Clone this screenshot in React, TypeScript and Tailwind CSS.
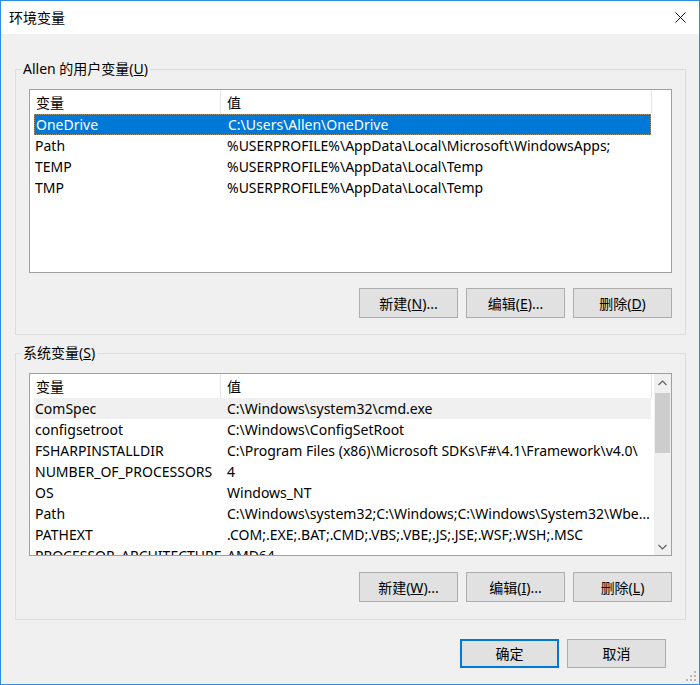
import type { ReactNode } from "react";

type Row = { name: string; value: string };

const userVars: Row[] = [
    { name: "OneDrive", value: "C:\\Users\\Allen\\OneDrive" },
    { name: "Path", value: "%USERPROFILE%\\AppData\\Local\\Microsoft\\WindowsApps;" },
    { name: "TEMP", value: "%USERPROFILE%\\AppData\\Local\\Temp" },
    { name: "TMP", value: "%USERPROFILE%\\AppData\\Local\\Temp" },
];

const systemVars: Row[] = [
    { name: "ComSpec", value: "C:\\Windows\\system32\\cmd.exe" },
    { name: "configsetroot", value: "C:\\Windows\\ConfigSetRoot" },
    { name: "FSHARPINSTALLDIR", value: "C:\\Program Files (x86)\\Microsoft SDKs\\F#\\4.1\\Framework\\v4.0\\" },
    { name: "NUMBER_OF_PROCESSORS", value: "4" },
    { name: "OS", value: "Windows_NT" },
    { name: "Path", value: "C:\\Windows\\system32;C:\\Windows;C:\\Windows\\System32\\Wbem;C:\\Windows\\System32\\WindowsPowerShell\\v1.0\\" },
    { name: "PATHEXT", value: ".COM;.EXE;.BAT;.CMD;.VBS;.VBE;.JS;.JSE;.WSF;.WSH;.MSC" },
    { name: "PROCESSOR_ARCHITECTURE", value: "AMD64" },
];

function Btn({ children, primary }: { children: ReactNode; primary?: boolean }) {
    return (
        <div className={`w-[99px] flex items-center justify-center bg-[#e1e1e1] border ${primary ? "border-[#0078d7] shadow-[inset_0_0_0_1px_#0078d7]" : "border-[#adadad]"}`}>
            {children}
        </div>
    );
}

function Header() {
    return (
        <div className="flex h-[24px] w-[622px] shrink-0">
            <div className="w-[191px] pl-[6px] flex items-center border-r border-[#e5e5e5]">变量</div>
            <div className="flex-1 pl-[6px] flex items-center border-r border-[#e5e5e5]">值</div>
        </div>
    );
}

function ListRow({ row, state }: { row: Row; state?: "focus" | "gray" }) {
    const bg = state === "focus"
        ? "bg-[#0078d7] text-white border border-dotted border-[#9c8f74]"
        : state === "gray" ? "bg-[#f0f0f0]" : "";
    return (
        <div className={`flex h-[21px] ml-[4px] w-[617px] items-center shrink-0 ${bg}`}>
            <div className="w-[192px] pl-[1px] truncate">{row.name}</div>
            <div className="flex-1 min-w-0 pl-[1px] pr-[1px] truncate">{row.value}</div>
        </div>
    );
}

function Chevron({ up }: { up?: boolean }) {
    return (
        <svg width="9" height="6" viewBox="0 0 9 6" className="text-[#606060]">
            <path d={up ? "M0.5 5 L4.5 1 L8.5 5" : "M0.5 1 L4.5 5 L8.5 1"} fill="none" stroke="currentColor" strokeWidth="1.2" />
        </svg>
    );
}

function Group({ title, children }: { title: ReactNode; children: ReactNode }) {
    return (
        <fieldset className="w-[671px] border border-[#dcdcdc] px-[13px]">
            <legend className="-ml-[8px] px-[2px] leading-[20px]">{title}</legend>
            {children}
        </fieldset>
    );
}

export default function App() {
    return (
        <div
            className="w-[700px] h-[685px] border border-[#2d8fe4] flex flex-col text-[14px] text-black select-none relative"
            style={{ fontFamily: '"Noto Sans", "Noto Sans CJK SC", sans-serif' }}
        >
            <div className="h-[33px] bg-white flex items-center justify-between pl-[8px] pr-[13px] shrink-0">
                <span className="leading-none">环境变量</span>
                <svg width="11" height="11" viewBox="0 0 11 11">
                    <path d="M0.5 0.5 L10.5 10.5 M10.5 0.5 L0.5 10.5" stroke="#111" strokeWidth="1" />
                </svg>
            </div>

            <div className="flex-1 bg-[#f0f0f0] px-[14px] flex flex-col">
                <div className="mt-[25px]">
                    <Group title={<>Allen 的用户变量(<u>U</u>)</>}>
                        <div className="mt-[10px] w-[643px] h-[184px] border border-[#a0a0a0] bg-white flex flex-col overflow-hidden">
                            <Header />
                            {userVars.map((r, i) => (
                                <ListRow key={r.name} row={r} state={i === 0 ? "focus" : undefined} />
                            ))}
                        </div>
                        <div className="mt-[15px] mb-[16px] h-[30px] flex justify-end gap-2">
                            <Btn>新建(<u>N</u>)...</Btn>
                            <Btn>编辑(<u>E</u>)...</Btn>
                            <Btn>删除(<u>D</u>)</Btn>
                        </div>
                    </Group>
                </div>

                <div className="mt-[8px]">
                    <Group title={<>系统变量(<u>S</u>)</>}>
                        <div className="mt-[10px] w-[643px] h-[183px] border border-[#a0a0a0] bg-white flex overflow-hidden">
                            <div className="w-[624px] flex flex-col overflow-hidden">
                                <Header />
                                {systemVars.map((r, i) => (
                                    <ListRow key={r.name} row={r} state={i === 0 ? "gray" : undefined} />
                                ))}
                            </div>
                            <div className="w-[17px] bg-[#f0f0f0] flex flex-col">
                                <div className="h-[17px] flex items-center justify-center"><Chevron up /></div>
                                <div className="flex-1 px-[1px] pt-[2px]">
                                    <div className="h-[60px] bg-[#cdcdcd]" />
                                </div>
                                <div className="h-[17px] flex items-center justify-center"><Chevron /></div>
                            </div>
                        </div>
                        <div className="mt-[16px] mb-[17px] h-[30px] flex justify-end gap-2">
                            <Btn>新建(<u>W</u>)...</Btn>
                            <Btn>编辑(<u>I</u>)...</Btn>
                            <Btn>删除(<u>L</u>)</Btn>
                        </div>
                    </Group>
                </div>

                <div className="mt-[19px] h-[29px] flex justify-end gap-2 pr-[19px]">
                    <Btn primary>确定</Btn>
                    <Btn>取消</Btn>
                </div>
            </div>

            <svg width="11" height="11" viewBox="0 0 11 11" className="absolute right-[2px] bottom-[2px]">
                {[[8, 0], [8, 4], [4, 4], [8, 8], [4, 8], [0, 8]].map(([x, y]) => (
                    <rect key={`${x}-${y}`} x={x} y={y} width="2" height="2" fill="#b8b8b8" />
                ))}
            </svg>
        </div>
    );
}
